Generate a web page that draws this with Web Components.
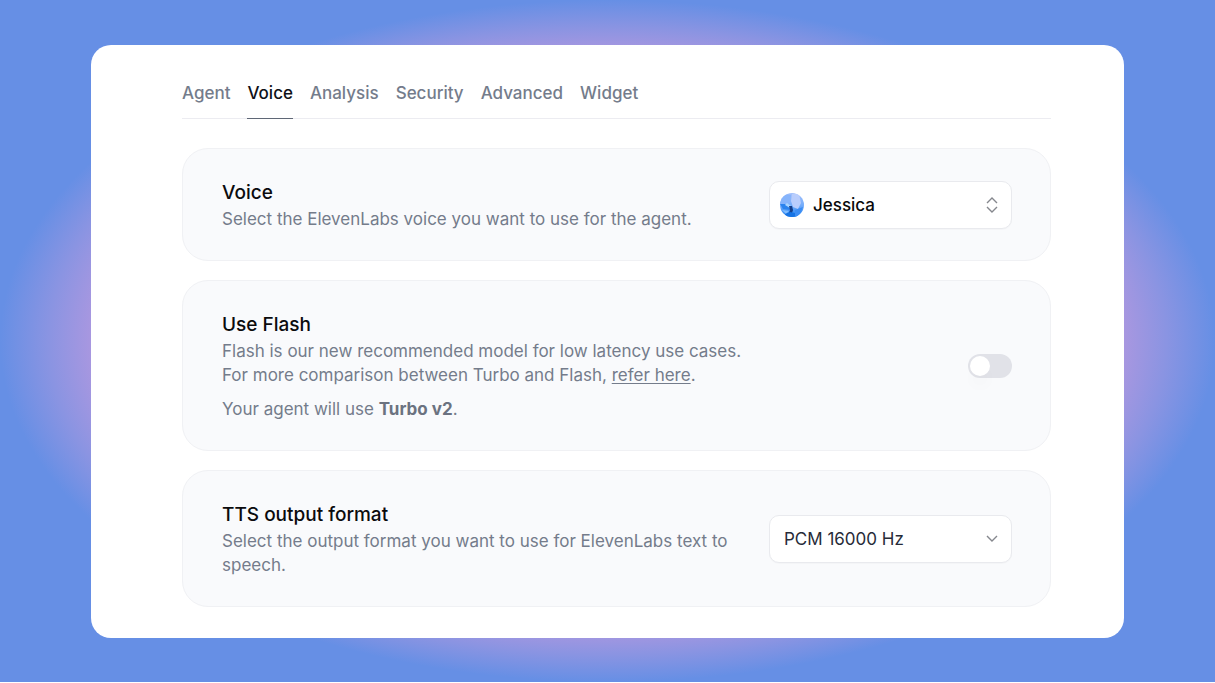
<!DOCTYPE html>
<html lang="en">
<head>
<meta charset="utf-8">
<meta name="viewport" content="width=device-width, initial-scale=1">
<title>Agent settings – Voice</title>
<style>
  html { background: #fff; }
  body { margin: 0; font-family: Inter, "Liberation Sans", sans-serif; font-size: 17px; line-height: 24px; color: #747c8b; }
  setting-card p { margin: 0; }
  setting-card p + p { margin-top: 10px; }
  setting-card a { color: inherit; text-underline-offset: 2px; text-decoration-thickness: 1px; }
  setting-card strong { color: #6b7280; }
</style>
</head>
<body>
<settings-page>
  <tab-bar slot="tabs">
    <tab-link>Agent</tab-link>
    <tab-link current>Voice</tab-link>
    <tab-link>Analysis</tab-link>
    <tab-link>Security</tab-link>
    <tab-link>Advanced</tab-link>
    <tab-link>Widget</tab-link>
  </tab-bar>
  <setting-card heading="Voice">
    <p>Select the ElevenLabs voice you want to use for the agent.</p>
    <select-field slot="control" kind="voice" label="Voice" value="Jessica"></select-field>
  </setting-card>
  <setting-card heading="Use Flash">
    <p>Flash is our new recommended model for low latency use cases.<br>For more comparison between Turbo and Flash, <a href="#models">refer here</a>.</p>
    <p>Your agent will use <strong>Turbo v2</strong>.</p>
    <toggle-switch slot="control" label="Use Flash"></toggle-switch>
  </setting-card>
  <setting-card heading="TTS output format">
    <p>Select the output format you want to use for ElevenLabs text to speech.</p>
    <select-field slot="control" kind="format" label="TTS output format" value="PCM 16000 Hz"></select-field>
  </setting-card>
</settings-page>

<script>
class BaseElement extends HTMLElement {
  connectedCallback() {
    if (this.shadowRoot) return;
    const template = document.createElement('template');
    template.innerHTML = this.render();
    this.attachShadow({ mode: 'open' }).append(template.content.cloneNode(true));
  }
}

customElements.define('settings-page', class extends BaseElement {
  render() {
    return `<style>
      :host { display: block; box-sizing: border-box; min-height: calc(100vh - 1px); padding: 45px 91px 44px;
        background: radial-gradient(closest-side, #b69ae0 80%, #a897e0 85%, #8a94e2 92%, #668fe5 100%); }
      main { display: flex; flex-direction: column; gap: 19px; padding: 30px 73px 31px 91px; border-radius: 20px; background: #fff; }
      nav { margin-bottom: 10px; }
    </style>
    <main><nav aria-label="Agent settings"><slot name="tabs"></slot></nav><slot></slot></main>`;
  }
});

customElements.define('tab-bar', class extends BaseElement {
  render() {
    return `<style>
      :host { display: flex; gap: 17px; box-shadow: inset 0 -1px #ececf1; }
    </style><slot></slot>`;
  }
});

customElements.define('tab-link', class extends BaseElement {
  render() {
    return `<style>
      :host { display: block; }
      a { display: block; padding: 6px 0 13px; border-bottom: 1px solid transparent; font-weight: 500; color: #747c8b; text-decoration: none; }
      :host([current]) a { color: #0f1117; border-color: #5f6776; }
    </style><a href="#"${this.hasAttribute('current') ? ' aria-current="page"' : ''}><slot></slot></a>`;
  }
});

customElements.define('setting-card', class extends BaseElement {
  render() {
    return `<style>
      :host { display: flex; align-items: center; justify-content: space-between; gap: 24px;
        padding: 30px 38px 29px 39px; border: 1px solid #f0f1f4; border-radius: 26px; background: #f9fafc; }
      .text { flex: 0 1 524px; }
      h2 { margin: 0; font-size: 19px; line-height: 28px; font-weight: 500; color: #0b0b0d; }
    </style>
    <div class="text"><h2>${this.getAttribute('heading')}</h2><slot></slot></div>
    <slot name="control"></slot>`;
  }
});

customElements.define('select-field', class extends BaseElement {
  render() {
    const voice = this.getAttribute('kind') === 'voice';
    const avatar = `<svg class="avatar" viewBox="0 0 24 24" aria-hidden="true">
      <defs>
        <linearGradient id="sky" x1="0" y1="0" x2="0" y2="1"><stop offset="0" stop-color="#a3c0fb"/><stop offset=".5" stop-color="#76aefb"/><stop offset="1" stop-color="#1f80f0"/></linearGradient>
        <clipPath id="disc"><circle cx="12" cy="12" r="12"/></clipPath>
        <filter id="soft" x="-30%" y="-30%" width="160%" height="160%"><feGaussianBlur stdDeviation=".7"/></filter>
      </defs>
      <g clip-path="url(#disc)"><rect width="24" height="24" fill="url(#sky)"/>
        <g filter="url(#soft)">
          <path d="M0 4l4-3 7 1-1 8-4 2-6-1z" fill="#86b4fb"/>
          <path d="M12 1h7l2 9-3 6-5-2-2-6z" fill="#b9cdfc"/>
          <path d="M0 11l5 0 5 3v3l-7-1z" fill="#2c83ee"/>
          <path d="M5 12l5 3 1-2-4-3z" fill="#a8d4ff"/>
          <path d="M2 17l7 1-3 3z" fill="#7fbcff"/>
          <path d="M9 13h3l1 4-1 3H9l1-3z" fill="#123f8c"/>
          <path d="M5 21l5-2 5 1 3 4H5z" fill="#1273e4"/>
          <path d="M15 17l8-3-4 9h-4z" fill="#3a8df4"/>
        </g></g></svg>`;
    const marks = voice ? 'M3 7 8 2 13 7M3 11 8 16 13 11' : 'M3 6 8 11 13 6';
    return `<style>
      :host { display: grid; flex: 0 0 243px; align-items: center; }
      select, svg { grid-area: 1 / 1; }
      select { appearance: none; box-sizing: border-box; width: 100%; height: 48px; margin: 0; padding: 0 40px 0 14px;
        border: 1px solid #e9eaee; border-radius: 10px; background: #fff; box-shadow: 0 1px 1px #00000006; font: inherit; color: #272b38; }
      :host([kind="voice"]) select { padding-left: 43px; font-weight: 500; color: #08090b; }
      .avatar { width: 24px; height: 24px; margin-left: 11px; pointer-events: none; }
      .marks { width: 16px; height: 18px; justify-self: end; margin-right: 12px; pointer-events: none; }
    </style>
    <select aria-label="${this.getAttribute('label')}"><option>${this.getAttribute('value')}</option></select>
    ${voice ? avatar : ''}
    <svg class="marks" viewBox="0 0 16 18" aria-hidden="true"><path d="${marks}" fill="none" stroke="#85878d" stroke-width="1.4"/></svg>`;
  }
});

customElements.define('toggle-switch', class extends BaseElement {
  render() {
    return `<style>
      :host { display: flex; flex: none; }
      input { appearance: none; box-sizing: border-box; width: 44px; height: 24px; margin: 0; padding: 2px; border-radius: 12px; background: #e1e2e8; }
      input::before { content: ""; display: block; width: 20px; height: 20px; border-radius: 10px; background: #fff; box-shadow: 0 12px 15px -3px #00000008; }
      input:checked { background: #0f1117; }
      input:checked::before { margin-left: auto; }
    </style><input type="checkbox" role="switch" aria-label="${this.getAttribute('label')}">`;
  }
});
</script>
</body>
</html>
